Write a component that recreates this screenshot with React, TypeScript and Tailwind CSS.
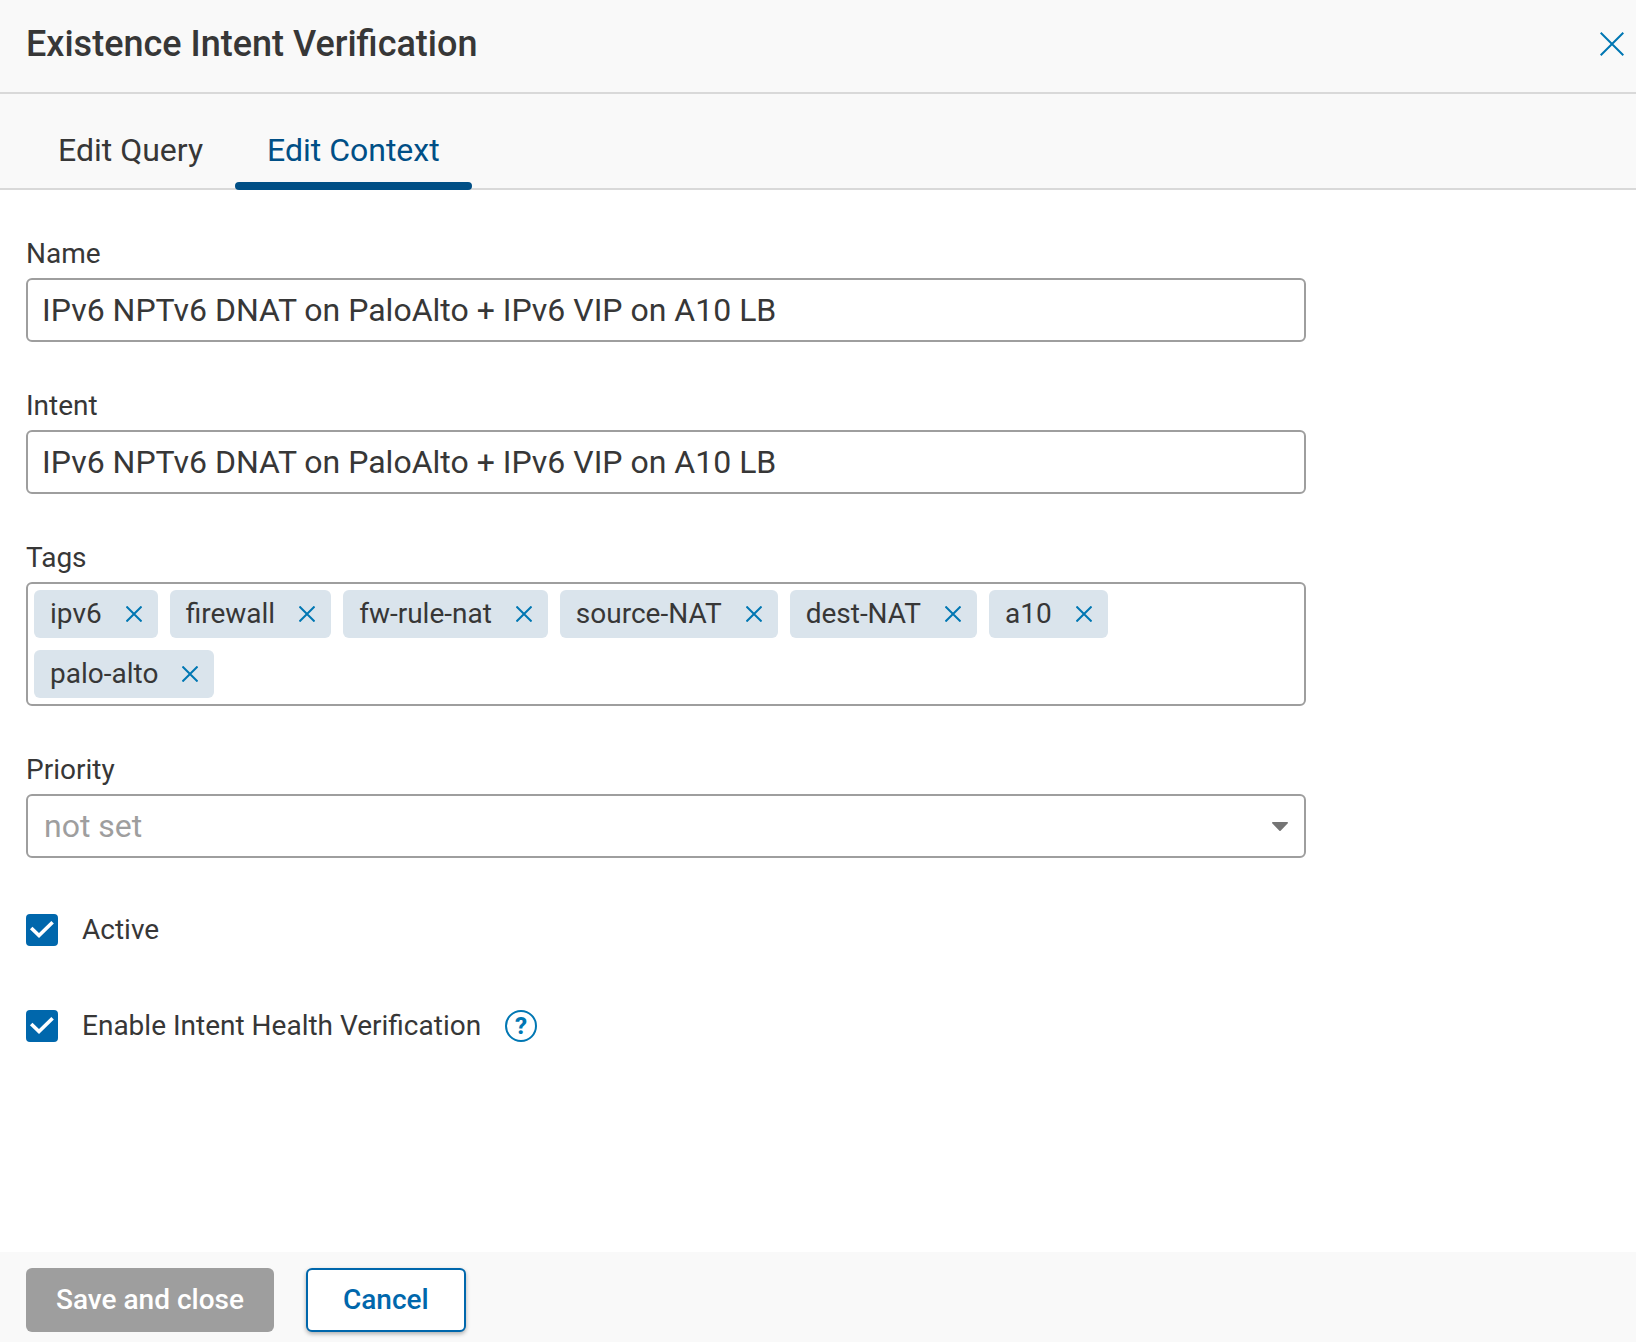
import { useState, type ReactNode } from "react";

const INTENT_TEXT = "IPv6 NPTv6 DNAT on PaloAlto + IPv6 VIP on A10 LB";

const INITIAL_TAGS = ["ipv6", "firewall", "fw-rule-nat", "source-NAT", "dest-NAT", "a10", "palo-alto"];

function CrossIcon({ className, strokeWidth }: { className: string; strokeWidth: number }) {
  return (
    <svg className={className} viewBox="0 0 24 24" fill="none" stroke="currentColor" strokeWidth={strokeWidth} aria-hidden="true">
      <path d="M.7.7 23.3 23.3M23.3.7.7 23.3" />
    </svg>
  );
}

function Tab({ label, selected, onSelect }: { label: string; selected: boolean; onSelect: () => void }) {
  return (
    <button
      type="button"
      role="tab"
      aria-selected={selected}
      onClick={onSelect}
      className={
        selected
          ? "relative h-24 px-8 pt-4 text-[32px] text-[#004f86] after:absolute after:inset-x-0 after:bottom-0 after:h-2 after:rounded-full after:bg-[#004f86]"
          : "relative h-24 px-8 pt-4 text-[32px]"
      }
    >
      {label}
    </button>
  );
}

function Field({ id, label, children }: { id: string; label: string; children: ReactNode }) {
  return (
    <div className="flex flex-col gap-1">
      <label htmlFor={id} className="self-start leading-10">
        {label}
      </label>
      {children}
    </div>
  );
}

function TextField({ id, label }: { id: string; label: string }) {
  const [value, setValue] = useState(INTENT_TEXT);
  return (
    <Field id={id} label={label}>
      <input
        id={id}
        type="text"
        value={value}
        onChange={(e) => setValue(e.target.value)}
        className="h-16 w-full rounded-md border-2 border-[#9e9e9e] bg-white px-3.5 text-[32px] outline-none focus:border-[#0067ac]"
      />
    </Field>
  );
}

function Checkbox({ id, label }: { id: string; label: string }) {
  const [checked, setChecked] = useState(true);
  return (
    <div className="flex items-center gap-6">
      <span className="relative size-8">
        <input
          id={id}
          type="checkbox"
          checked={checked}
          onChange={(e) => setChecked(e.target.checked)}
          className="peer block size-8 appearance-none rounded-sm border-2 border-[#9e9e9e] checked:border-[#0067ac] checked:bg-[#0067ac]"
        />
        <svg
          className="pointer-events-none absolute inset-0 hidden size-8 peer-checked:block"
          viewBox="0 0 32 32"
          fill="none"
          stroke="white"
          strokeWidth="3.6"
          aria-hidden="true"
        >
          <path d="M5.2 14 13 21.6 26.6 8.2" />
        </svg>
      </span>
      <label htmlFor={id} className="leading-8">
        {label}
      </label>
    </div>
  );
}

export default function App() {
  const [tab, setTab] = useState("context");
  const [tags, setTags] = useState(INITIAL_TAGS);

  return (
    <div className="flex min-h-screen flex-col bg-white font-['Roboto',sans-serif] text-[28px] text-[#373737]">
      <header className="flex items-center justify-between border-b-2 border-[#d9d9d9] bg-[#f9f9f9] pt-5 pr-3 pb-6 pl-[26px]">
        <h1 className="text-[36px] leading-12 font-medium">Existence Intent Verification</h1>
        <button type="button" aria-label="Close" className="text-[#0077b3]">
          <CrossIcon className="size-6" strokeWidth={2} />
        </button>
      </header>

      <div role="tablist" className="relative flex bg-[#f9f9f9] pl-[26px] shadow-[inset_0_-2px_0_#d9d9d9]">
        <Tab label="Edit Query" selected={tab === "query"} onSelect={() => setTab("query")} />
        <Tab label="Edit Context" selected={tab === "context"} onSelect={() => setTab("context")} />
      </div>

      <main className="flex flex-1 flex-col px-[26px] pt-11">
        <form id="context" className="flex w-full max-w-[1280px] flex-col gap-11">
          <TextField id="name" label="Name" />
          <TextField id="intent" label="Intent" />

          <Field id="tags" label="Tags">
            <div className="flex flex-wrap gap-3 rounded-md border-2 border-[#9e9e9e] p-1.5">
              {tags.map((tag) => (
                <span key={tag} className="flex h-12 items-center gap-6 rounded-md bg-[#dae4ec] px-4">
                  {tag}
                  <button
                    type="button"
                    aria-label={`Remove ${tag}`}
                    onClick={() => setTags(tags.filter((t) => t !== tag))}
                    className="text-[#0077b3]"
                  >
                    <CrossIcon className="size-4" strokeWidth={3} />
                  </button>
                </span>
              ))}
              <input id="tags" type="text" className="h-12 min-w-52 flex-1 bg-transparent outline-none" />
            </div>
          </Field>

          <Field id="priority" label="Priority">
            <div className="relative">
              <select
                id="priority"
                defaultValue=""
                className="h-16 w-full appearance-none rounded-md border-2 border-[#9e9e9e] bg-white px-4 text-[32px] text-[#9e9e9e] outline-none focus:border-[#0067ac]"
              >
                <option value="">not set</option>
                <option value="low">Low</option>
                <option value="medium">Medium</option>
                <option value="high">High</option>
              </select>
              <svg
                className="pointer-events-none absolute top-7 right-[18px] h-[9px] w-4 text-[#757575]"
                viewBox="0 0 16 9"
                fill="currentColor"
                aria-hidden="true"
              >
                <path d="M.8 0H15.2Q16.6.6 15.6 1.6L8.6 8.7Q8 9.2 7.4 8.7L.4 1.6Q-.6.6.8 0Z" />
              </svg>
            </div>
          </Field>

          <div className="flex flex-col gap-16 pt-3">
            <Checkbox id="active" label="Active" />
            <div className="flex items-center gap-6">
              <Checkbox id="health" label="Enable Intent Health Verification" />
              <button
                type="button"
                aria-label="About intent health verification"
                className="flex size-8 items-center justify-center rounded-full border-2 border-[#0077b3] text-2xl leading-none font-extrabold text-[#0077b3]"
              >
                ?
              </button>
            </div>
          </div>
        </form>
      </main>

      <footer className="flex gap-8 bg-[#f9f9f9] px-[26px] pt-4 pb-2.5 font-medium">
        <button type="submit" form="context" disabled className="h-16 rounded-md bg-[#9e9e9e] px-[30px] text-white">
          Save and close
        </button>
        <button
          type="button"
          className="h-16 rounded-md border-2 border-[#0067ac] bg-white px-[35px] text-[#0067ac] shadow-[0_2px_4px_rgba(0,0,0,0.3)]"
        >
          Cancel
        </button>
      </footer>
    </div>
  );
}
